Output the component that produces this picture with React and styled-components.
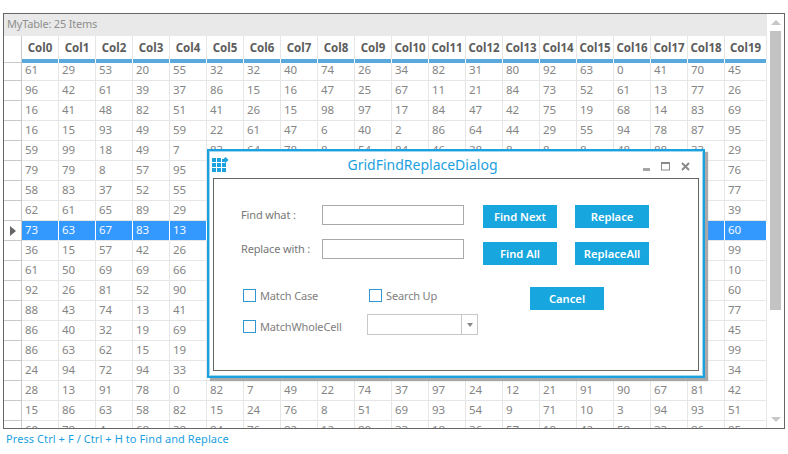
import React from "react";
import styled, { createGlobalStyle } from "styled-components";

const Global = createGlobalStyle`
  html, body { margin: 0; padding: 0; background: #fff; }
  body { font-family: "Noto Sans", "Open Sans", Arial, sans-serif; font-size: 11.5px; color: #777; }
`;

const Page = styled.div`
  width: 788px;
  height: 454px;
  padding: 13px 0 0 3px;
  box-sizing: border-box;
  position: relative;
  overflow: hidden;
`;

const Frame = styled.div`
  width: 782px;
  height: 416px;
  box-sizing: border-box;
  border: 1px solid #666;
  display: flex;
  overflow: hidden;
`;

const TableArea = styled.div`
  width: 763px;
  flex: none;
  display: flex;
  flex-direction: column;
  overflow: hidden;
`;

const GroupHeader = styled.div`
  height: 22px;
  flex: none;
  background: #e9e9e9;
  color: #8f8f8f;
  font-size: 11px;
  letter-spacing: -0.2px;
  line-height: 19px;
  padding-left: 3px;
`;

const Row = styled.div`
  display: grid;
  grid-template-columns: 18px repeat(19, 37px) 42px;
  flex: none;
  height: ${(p) => (p.$header ? "25px" : "20px")};
`;

const RowHead = styled.div`
  box-sizing: border-box;
  border-right: 1px solid #c9c9c9;
  border-bottom: 1px solid #c9c9c9;
  display: flex;
  align-items: center;
  justify-content: center;
`;

const Arrow = styled.span`
  width: 0;
  height: 0;
  margin-left: 1px;
  border-left: 6px solid #666;
  border-top: 5px solid transparent;
  border-bottom: 5px solid transparent;
`;

const HeadCell = styled.div`
  box-sizing: border-box;
  border-right: 1px solid #e6e6e6;
  border-bottom: 4px solid #5aa9dc;
  font-weight: 700;
  font-size: 11.5px;
  color: #5c5c5c;
  text-align: center;
  line-height: 23px;
  position: relative;
  &::after {
    content: "";
    position: absolute;
    right: -1px;
    bottom: -4px;
    width: 1px;
    height: 4px;
    background: #fff;
  }
`;

const Cell = styled.div`
  box-sizing: border-box;
  border-right: 1px solid ${(p) => (p.$sel ? "#fff" : "#e6e6e6")};
  border-bottom: 1px solid #e6e6e6;
  background: ${(p) => (p.$sel ? "#3399ff" : "#fff")};
  color: ${(p) => (p.$sel ? "#f2f8ff" : "#858585")};
  padding-left: 3px;
  font-size: 11.5px;
  line-height: 18px;
`;

const Scroll = styled.div`
  width: 17px;
  flex: none;
  display: flex;
  flex-direction: column;
  align-items: center;
  padding-top: 6px;
  box-sizing: border-box;
  position: relative;
`;

const ScrollUp = styled.span`
  width: 0;
  height: 0;
  border-left: 5px solid transparent;
  border-right: 5px solid transparent;
  border-bottom: 5px solid #c8c8c8;
`;

const ScrollDown = styled.span`
  width: 0;
  height: 0;
  margin-top: 107px;
  border-left: 5px solid transparent;
  border-right: 5px solid transparent;
  border-top: 5px solid #c8c8c8;
`;

const Thumb = styled.div`
  width: 11px;
  height: 279px;
  margin-top: 6px;
  background: #c3c3c3;
`;

const Footer = styled.div`
  color: #1c9fe0;
  font-size: 11px;
  letter-spacing: 0.08px;
  line-height: 16px;
  margin: 2px 0 0 3px;
`;

const Dialog = styled.div`
  position: absolute;
  left: 207px;
  top: 149px;
  width: 498px;
  height: 229px;
  box-sizing: border-box;
  background: #fff;
  border: 2px solid #1ba1de;
  outline: 1px solid #9fd6f2;
  outline-offset: -3px;
  box-shadow: 3px 3px 1px #a8a8a8;
  display: flex;
  flex-direction: column;
`;

const TitleBar = styled.div`
  height: 27px;
  flex: none;
  position: relative;
  display: flex;
  align-items: center;
  justify-content: center;
  padding-right: 67px;
`;

const Title = styled.div`
  color: #1c9fe0;
  font-size: 14px;
  line-height: 20px;
  margin-top: 1px;
`;

const AppIcon = styled.svg`
  position: absolute;
  left: 3px;
  top: 6px;
`;

const WinControls = styled.div`
  position: absolute;
  right: 13px;
  top: 11px;
  display: flex;
  align-items: flex-end;
  gap: 10px;
`;

const Panel = styled.div`
  width: 486px;
  height: 193px;
  margin-left: 4px;
  box-sizing: border-box;
  border: 1px solid #666;
  padding: 26px 0 0 27px;
  display: flex;
  flex-direction: column;
`;

const TopSection = styled.div`
  display: flex;
  gap: 19px;
`;

const Fields = styled.div`
  display: flex;
  flex-direction: column;
  gap: 14px;
  width: 223px;
`;

const Field = styled.label`
  display: flex;
  align-items: center;
  height: 20px;
`;

const Label = styled.span`
  width: 81px;
  flex: none;
  color: #777;
  font-size: 11px;
  letter-spacing: -0.15px;
  padding-bottom: 2px;
`;

const TextInput = styled.div`
  width: 142px;
  height: 20px;
  box-sizing: border-box;
  border: 1px solid #aaa;
  background: #fff;
`;

const Buttons = styled.div`
  display: grid;
  grid-template-columns: 74px 74px;
  grid-auto-rows: 23px;
  column-gap: 18px;
  row-gap: 14px;
`;

const Btn = styled.div`
  width: 74px;
  height: 23px;
  background: #17a6dd;
  color: #fff;
  font-weight: 600;
  font-size: 11.2px;
  line-height: 23px;
  text-align: center;
`;

const BottomSection = styled.div`
  display: flex;
  margin-top: 22px;
`;

const Options = styled.div`
  width: 289px;
  flex: none;
  box-sizing: border-box;
  padding-left: 2px;
  display: grid;
  grid-template-columns: 124px 111px;
  grid-template-rows: 17px 21px;
  row-gap: 10px;
  align-content: start;
`;

const Check = styled.div`
  display: flex;
  align-items: center;
  gap: 4px;
  color: #808080;
  font-size: 11px;
  letter-spacing: -0.15px;
  line-height: 13px;
  padding-left: ${(p) => (p.$inset ? "2px" : "0")};
  align-self: ${(p) => (p.$low ? "end" : "center")};
  margin-bottom: ${(p) => (p.$low ? "2px" : "0")};
`;

const Box = styled.span`
  width: 13px;
  height: 13px;
  flex: none;
  box-sizing: border-box;
  border: 1px solid #2f97d4;
  background: #fff;
`;

const Combo = styled.div`
  width: 111px;
  height: 21px;
  box-sizing: border-box;
  border: 1px solid #c8c8c8;
  display: flex;
  justify-content: flex-end;
`;

const ComboButton = styled.span`
  width: 15px;
  border-left: 1px solid #c8c8c8;
  display: flex;
  align-items: center;
  justify-content: center;
  &::before {
    content: "";
    width: 0;
    height: 0;
    border-left: 3.5px solid transparent;
    border-right: 3.5px solid transparent;
    border-top: 4px solid #888;
  }
`;

const visible = [
  [61,29,53,20,55,32,32,40,74,26,34,82,31,80,92,63,0,41,70,45],
  [96,42,61,39,37,86,15,16,47,25,67,11,21,84,73,52,61,13,77,26],
  [16,41,48,82,51,41,26,15,98,97,17,84,47,42,75,19,68,14,83,69],
  [16,15,93,49,59,22,61,47,6,40,2,86,64,44,29,55,94,78,87,95],
  [59,99,18,49,7,83,64,78,8,54,84,46,28,8,8,8,48,88,33,29],
  [79,79,8,57,95,,,,,,,,,,,,,,,76],
  [58,83,37,52,55,,,,,,,,,,,,,,,77],
  [62,61,65,89,29,,,,,,,,,,,,,,,39],
  [73,63,67,83,13,,,,,,,,,,,,,,,60],
  [36,15,57,42,26,,,,,,,,,,,,,,,99],
  [61,50,69,69,66,,,,,,,,,,,,,,,10],
  [92,26,81,52,90,,,,,,,,,,,,,,,60],
  [88,43,74,13,41,,,,,,,,,,,,,,,77],
  [86,40,32,19,69,,,,,,,,,,,,,,,45],
  [86,63,62,15,19,,,,,,,,,,,,,,,99],
  [24,94,72,94,33,,,,,,,,,,,,,,,34],
  [28,13,91,78,0,82,7,49,22,74,37,97,24,12,21,91,90,67,81,42],
  [15,86,63,58,82,15,24,76,8,51,69,93,54,9,71,10,3,94,93,51],
  [60,78,4,68,38,84,76,82,12,80,33,18,36,57,18,42,58,33,86,85],
];

const SELECTED = 8;
const columns = Array.from({ length: 20 }, (_, i) => `Col${i}`);

export default function App() {
  return (
    <Page>
      <Global />
      <Frame>
        <TableArea>
          <GroupHeader>MyTable: 25 Items</GroupHeader>
          <Row $header>
            <RowHead />
            {columns.map((c) => (
              <HeadCell key={c}>{c}</HeadCell>
            ))}
          </Row>
          {visible.map((row, r) => (
            <Row key={r}>
              <RowHead>{r === SELECTED && <Arrow />}</RowHead>
              {Array.from({ length: 20 }, (_, c) => (
                <Cell key={c} $sel={r === SELECTED}>
                  {row[c]}
                </Cell>
              ))}
            </Row>
          ))}
        </TableArea>
        <Scroll>
          <ScrollUp />
          <Thumb />
          <ScrollDown />
        </Scroll>
      </Frame>
      <Footer>Press Ctrl + F / Ctrl + H to Find and Replace</Footer>

      <Dialog>
        <TitleBar>
          <AppIcon width="17" height="17" viewBox="0 0 17 17" fill="#1ba1de">
            <rect x="0" y="1" width="4" height="4" />
            <rect x="5" y="1" width="4" height="4" />
            <rect x="10" y="2" width="2" height="3" />
            <rect x="0" y="6" width="4" height="4" />
            <rect x="5" y="6" width="4" height="4" />
            <rect x="10" y="6" width="4" height="4" />
            <rect x="0" y="11" width="4" height="4" />
            <rect x="5" y="11" width="4" height="4" />
            <rect x="10" y="11" width="4" height="4" />
            <polygon points="13.5,0 16.5,3 13.5,6 10.5,3" />
          </AppIcon>
          <Title>GridFindReplaceDialog</Title>
          <WinControls>
            <svg width="8" height="9" viewBox="0 0 8 9">
              <rect x="0" y="6" width="7" height="3" fill="#a5a5a5" />
            </svg>
            <svg width="10" height="9" viewBox="0 0 10 9" fill="none">
              <rect x="0.5" y="1" width="8" height="7" stroke="#8a8a8a" />
              <rect x="0" y="0" width="9" height="2" fill="#8a8a8a" />
            </svg>
            <svg width="9" height="9" viewBox="0 0 9 9">
              <path d="M1 1 L8 8 M8 1 L1 8" stroke="#8a8a8a" strokeWidth="2" />
            </svg>
          </WinControls>
        </TitleBar>
        <Panel>
          <TopSection>
            <Fields>
              <Field>
                <Label>Find what :</Label>
                <TextInput />
              </Field>
              <Field>
                <Label>Replace with :</Label>
                <TextInput />
              </Field>
            </Fields>
            <Buttons>
              <Btn>Find Next</Btn>
              <Btn>Replace</Btn>
              <Btn>Find All</Btn>
              <Btn>ReplaceAll</Btn>
            </Buttons>
          </TopSection>
          <BottomSection>
            <Options>
              <Check>
                <Box />
                Match Case
              </Check>
              <Check $inset>
                <Box />
                Search Up
              </Check>
              <Check $low>
                <Box />
                MatchWholeCell
              </Check>
              <Combo>
                <ComboButton />
              </Combo>
            </Options>
            <Btn>Cancel</Btn>
          </BottomSection>
        </Panel>
      </Dialog>
    </Page>
  );
}
